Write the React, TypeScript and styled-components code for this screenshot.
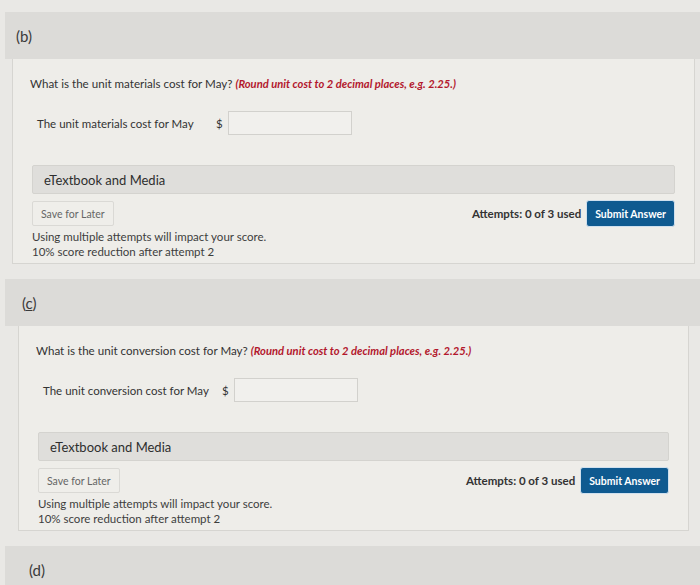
import React from 'react';
import styled, { createGlobalStyle } from 'styled-components';

const GlobalStyle = createGlobalStyle`
  html, body {
    margin: 0;
    padding: 0;
    background: #e9e8e5;
    font-family: Lato, "Open Sans", sans-serif;
    color: #333;
  }
`;

interface PartProps {
  letter: string;
  shift: number;
  question: string;
  label: string;
  underline?: boolean;
}

const Part = ({ letter, shift, question, label, underline }: PartProps) => {
  return (
    <Section>
      <Header $shift={shift}>
        {underline ? (
          <span>(<u>{letter}</u>)</span>
        ) : (
          <span>({letter})</span>
        )}
      </Header>
      <Panel $shift={shift}>
        <Question>
          {question} <Hint>(Round unit cost to 2 decimal places, e.g. 2.25.)</Hint>
        </Question>
        <AnswerRow>
          <Label>{label}</Label>
          <Dollar>$</Dollar>
          <Input type="text" />
        </AnswerRow>
        <MediaBar>eTextbook and Media</MediaBar>
        <Footer>
          <SaveButton>Save for Later</SaveButton>
          <Attempts>Attempts: 0 of 3 used</Attempts>
          <SubmitButton>Submit Answer</SubmitButton>
        </Footer>
        <Notice>
          Using multiple attempts will impact your score.
          <br />
          10% score reduction after attempt 2
        </Notice>
      </Panel>
    </Section>
  );
};

const App = () => {
  return (
    <Page>
      <GlobalStyle />
      <Part
        letter="b"
        shift={0}
        question="What is the unit materials cost for May?"
        label="The unit materials cost for May"
      />
      <Part
        letter="c"
        shift={6}
        underline
        question="What is the unit conversion cost for May?"
        label="The unit conversion cost for May"
      />
      <Section>
        <Header $shift={13}>(d)</Header>
      </Section>
    </Page>
  );
};

// Whole page, gray backdrop
const Page = styled.main`
  padding-top: 12px;
  height: 585px;
  box-sizing: border-box;
  overflow: hidden;
`;

const Section = styled.section`
  margin-bottom: 15px;
`;

// Gray band holding the part letter
const Header = styled.div<{ $shift: number }>`
  height: 47px;
  margin-left: 5px;
  padding-left: ${(p) => 11 + p.$shift}px;
  background: #dcdbd8;
  display: flex;
  align-items: center;
  font-size: 15px;
  color: #3a3a3a;
`;

// Lighter card below the header
const Panel = styled.div<{ $shift: number }>`
  height: 205px;
  box-sizing: border-box;
  margin: 0 ${(p) => 5 + p.$shift}px 0 ${(p) => 12 + p.$shift}px;
  padding: 17px 19px 0 17px;
  background: #eeede9;
  border: 1px solid #d6d5d1;
  border-top: none;
`;

const Question = styled.p`
  margin: 0;
  font-size: 11.6px;
  line-height: 15px;
  color: #333;
`;

const Hint = styled.span`
  color: #b3182d;
  font-weight: 700;
  font-style: italic;
  font-size: 11.2px;
`;

const AnswerRow = styled.div`
  display: flex;
  align-items: center;
  margin: 20px 0 0 7px;
  height: 24px;
`;

const Label = styled.span`
  font-size: 11.5px;
  color: #333;
  width: 179px;
`;

const Dollar = styled.span`
  font-size: 11.5px;
  width: 12px;
`;

const Input = styled.input`
  width: 124px;
  height: 24px;
  box-sizing: border-box;
  border: 1px solid #d2d1cd;
  background: #f1f0ed;
  margin: 0;
`;

const MediaBar = styled.div`
  margin: 30px 0 0 2px;
  height: 29px;
  box-sizing: border-box;
  display: flex;
  align-items: center;
  padding-left: 11px;
  background: #dfdedb;
  border: 1px solid #d4d3cf;
  border-radius: 2px;
  font-size: 13px;
  color: #2e2e2e;
`;

const Footer = styled.div`
  display: flex;
  align-items: center;
  height: 27px;
  margin: 6px 0 0 2px;
`;

const SaveButton = styled.button`
  height: 25px;
  padding: 0 8px;
  border: 1px solid #dad9d5;
  border-radius: 2px;
  background: #efeeea;
  font-family: inherit;
  font-size: 10.5px;
  color: #666;
`;

const Attempts = styled.span`
  margin-left: auto;
  margin-right: 5px;
  font-size: 11.5px;
  font-weight: 700;
  color: #333;
`;

const SubmitButton = styled.button`
  height: 27px;
  padding: 0 8px;
  border: 1px solid #cfe0ee;
  border-radius: 3px;
  background: #0f5a90;
  color: #fff;
  font-family: inherit;
  font-size: 10.5px;
  font-weight: 700;
`;

const Notice = styled.p`
  margin: 2px 0 0 2px;
  font-size: 11.5px;
  line-height: 15px;
  color: #3d3d3d;
`;

export default App;
